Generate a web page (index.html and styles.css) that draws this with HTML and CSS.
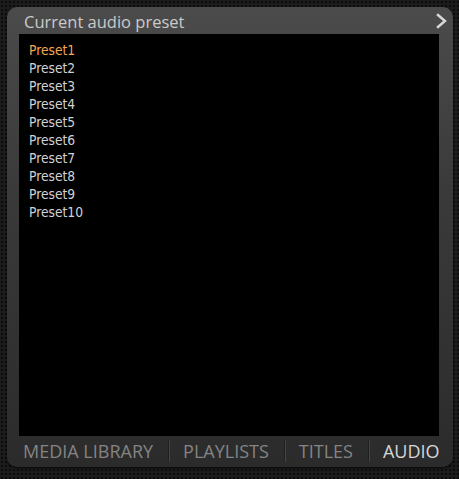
FILE: index.html
```html
<!DOCTYPE html>
<html lang="en">
<head>
  <meta charset="UTF-8">
  <meta name="viewport" content="width=device-width, initial-scale=1.0">
  <title>Current audio preset</title>
  <link rel="stylesheet" href="styles.css">
</head>
<body>

<div class="panel">
  <div class="panel-header">
    <span class="panel-title">Current audio preset</span>
    <svg class="arrow" width="12" height="16" viewBox="0 0 12 16">
      <path d="M2 2 L9 8 L2 14" fill="none" stroke="#d8d8d8" stroke-width="2.4" stroke-linecap="square"/>
    </svg>
  </div>

  <ul class="preset-list">
    <li class="selected">Preset1</li>
    <li>Preset2</li>
    <li>Preset3</li>
    <li>Preset4</li>
    <li>Preset5</li>
    <li>Preset6</li>
    <li>Preset7</li>
    <li>Preset8</li>
    <li>Preset9</li>
    <li>Preset10</li>
  </ul>

  <div class="tabs">
    <span class="tab">MEDIA LIBRARY</span>
    <span class="sep"></span>
    <span class="tab">PLAYLISTS</span>
    <span class="sep"></span>
    <span class="tab">TITLES</span>
    <span class="sep"></span>
    <span class="tab active">AUDIO</span>
  </div>
</div>

</body>
</html>
```

FILE: styles.css
```css
body {
  margin: 0;
  width: 459px;
  height: 479px;
  overflow: hidden;
  font-family: "Open Sans", "DejaVu Sans", sans-serif;
  background-color: #1c1c1c;
  background-image: radial-gradient(circle, #0c0c0c 1px, transparent 1.3px);
  background-size: 4px 4px;
  padding: 7px 6px 0 7px;
  box-sizing: border-box;
}

.panel {
  height: 460px;
  border-radius: 10px;
  background: linear-gradient(to bottom, #4b4b4b 0%, #3a3a3a 40%, #2b2b2b 100%);
  box-shadow: 0 1px 2px rgba(0, 0, 0, 0.8);
  display: flex;
  flex-direction: column;
  padding: 0 14px 0 12px;
}

.panel-header {
  height: 27px;
  flex-shrink: 0;
  display: flex;
  align-items: center;
  justify-content: space-between;
}

.panel-title {
  color: #cacaca;
  font-size: 16.5px;
  padding-left: 5px;
  margin-top: 1px;
}

.arrow {
  margin-right: -9px;
  margin-top: 1px;
}

.preset-list {
  list-style: none;
  margin: 0;
  padding: 7px 10px;
  background: #000;
  height: 402px;
  flex-shrink: 0;
  box-sizing: border-box;
  font-family: "DejaVu Sans Condensed", "Open Sans", sans-serif;
  font-size: 13.7px;
  line-height: 18px;
  color: #d2d2d2;
}

.preset-list .selected {
  color: #f3a653;
}

.tabs {
  flex: 1;
  display: flex;
  align-items: center;
  font-size: 18px;
  color: #848484;
  margin-left: 4px;
  margin-right: -4px;
  padding-bottom: 2px;
  white-space: nowrap;
}

.tab {
  flex-shrink: 0;
}

.tab.active {
  color: #d6d6d6;
}

.sep {
  flex-shrink: 0;
  width: 1px;
  height: 22px;
  background: #1f1f1f;
  border-right: 1px solid #454545;
  margin: 0 13px 0 15px;
}
```
